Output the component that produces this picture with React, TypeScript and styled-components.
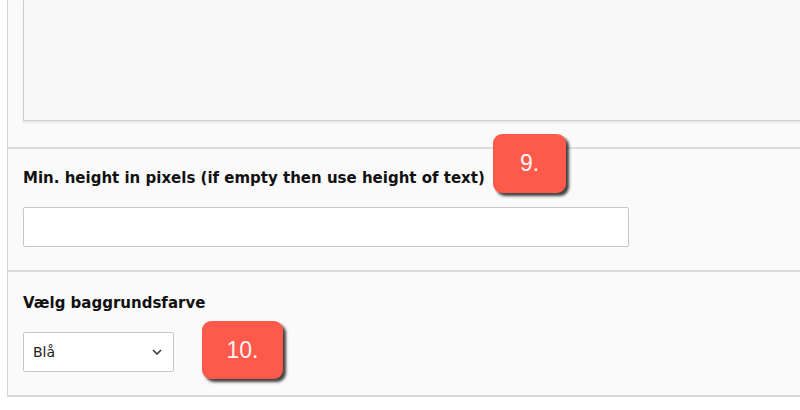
import React from "react";
import styled, { createGlobalStyle } from "styled-components";

const Global = createGlobalStyle`
  html, body { margin: 0; padding: 0; background: #ffffff; }
  body { font-family: "DejaVu Sans", Verdana, sans-serif; overflow: hidden; }
  * { box-sizing: border-box; }
`;

const Page = styled.div`
  width: 800px;
  height: 410px;
  position: relative;
  overflow: hidden;
`;

const Panel = styled.div`
  margin-left: 7px;
  width: 820px;
  background: #fafafa;
  border-left: 1px solid #d4d4d4;
  border-bottom: 2px solid #d6d6d6;
`;

const Section = styled.div<{ $first?: boolean; $pt?: number }>`
  padding: ${(p) => (p.$first ? "0 0 26px 15px" : `${p.$pt ?? 18}px 0 23px 15px`)};
  border-top: ${(p) => (p.$first ? "none" : "2px solid #dcdcdc")};
`;

const TextArea = styled.div`
  width: 900px;
  height: 121px;
  background: #f9f9f9;
  border-left: 1px solid #cfcfcf;
  border-bottom: 1px solid #cfcfcf;
  box-shadow: 0 2px 2px rgba(0, 0, 0, 0.08);
`;

const Label = styled.div<{ $mb?: number }>`
  font-size: 15px;
  font-weight: bold;
  color: #111;
  line-height: 18px;
  margin: 0 0 ${(p) => p.$mb ?? 22}px 0;
`;

const Input = styled.div`
  width: 606px;
  height: 40px;
  background: #fff;
  border: 1px solid #c8c8c8;
  border-radius: 2px;
`;

const Select = styled.div`
  width: 151px;
  height: 40px;
  background: #fff;
  border: 1px solid #c8c8c8;
  border-radius: 2px;
  display: flex;
  align-items: center;
  justify-content: space-between;
  padding: 0 11px 0 9px;
  font-size: 14px;
  color: #222;
`;

const Badge = styled.div<{ $w: number; $h: number }>`
  position: absolute;
  width: ${(p) => p.$w}px;
  height: ${(p) => p.$h}px;
  background: #fd5a4c;
  border-radius: 9px;
  box-shadow: 3px 3px 3px rgba(0, 0, 0, 0.75);
  color: #fff4f2;
  font-family: "Liberation Sans", Arial, sans-serif;
  font-size: 23px;
  display: flex;
  align-items: center;
  justify-content: center;
`;

export default function App() {
  return (
    <Page>
      <Global />
      <Panel>
        <Section $first>
          <TextArea />
        </Section>
        <Section $pt={20}>
          <Label $mb={20}>Min. height in pixels (if empty then use height of text)</Label>
          <Input />
        </Section>
        <Section $pt={22}>
          <Label $mb={20}>Vælg baggrundsfarve</Label>
          <Select>
            <span>Blå</span>
            <svg width="10" height="6" viewBox="0 0 10 6">
              <path d="M1 1 L5 5 L9 1" fill="none" stroke="#333" strokeWidth="1.5" />
            </svg>
          </Select>
        </Section>
      </Panel>
      <Badge $w={73} $h={59} style={{ left: 493, top: 134 }}>9.</Badge>
      <Badge $w={81} $h={58} style={{ left: 202, top: 321 }}>10.</Badge>
    </Page>
  );
}
